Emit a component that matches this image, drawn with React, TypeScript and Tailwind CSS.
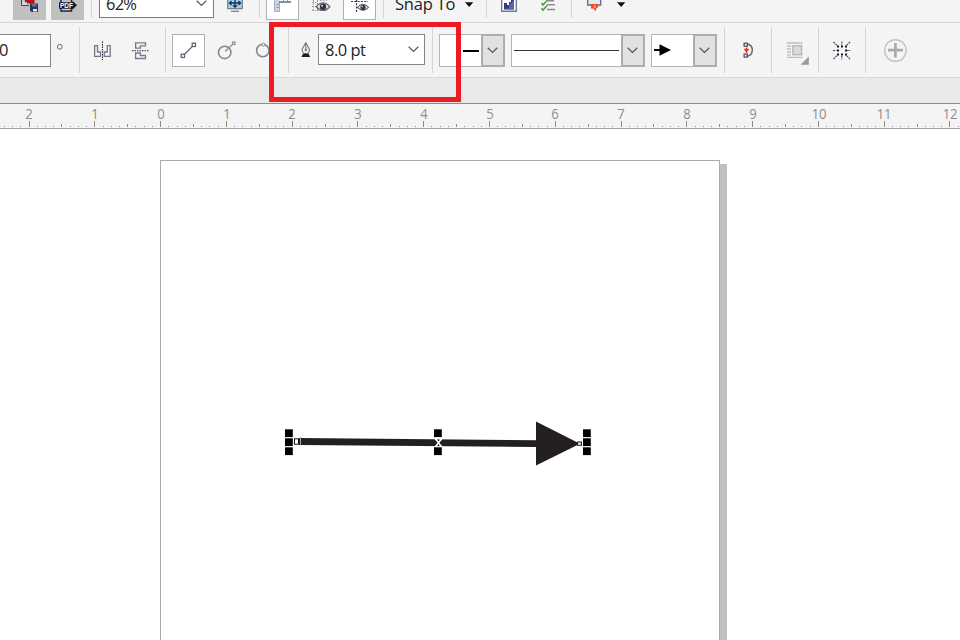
import React from "react";

const Sep = ({ className = "" }: { className?: string }) => (
  <div className={"w-px shrink-0 bg-[#d5d5d5] " + className} />
);

const Chevron = () => (
  <svg width="11" height="7" viewBox="0 0 11 7" fill="none" stroke="#555" strokeWidth="1.2">
    <path d="M0.7 0.8 L5.5 5.5 L10.3 0.8" />
  </svg>
);

const Caret = ({ className = "" }: { className?: string }) => (
  <svg className={"shrink-0 " + className} width="10" height="20" viewBox="0 0 10 20">
    <path d="M1 2.2 H9.3 L5.2 7 Z" fill="#111" />
  </svg>
);

const Combo = ({ className, children }: { className: string; children: React.ReactNode }) => (
  <div className={"flex h-[33px] shrink-0 border border-[#b4b4b4] bg-white " + className}>
    <div className="flex min-w-0 flex-1 items-center">{children}</div>
    <div className="-my-px -mr-px flex w-6 shrink-0 items-center justify-center border-2 border-[#adadad] bg-[#e1e1e1] pr-px">
      <Chevron />
    </div>
  </div>
);

const Eye = ({ x, y, s }: { x: number; y: number; s: number }) => (
  <g transform={`translate(${x} ${y}) scale(${s})`}>
    <path d="M-7 0 Q0 -8 7 0 Q0 7.5 -7 0Z" fill="#eeeeef" stroke="#66666f" strokeWidth="1.3" />
    <circle r="3.3" fill="#34343f" />
    <circle cx="-1" cy="-1" r="1" fill="#ddd" />
  </g>
);

function StandardBar() {
  return (
    <div className="flex h-[23px] items-start overflow-hidden border-b border-[#d8d8d8] bg-[#f4f4f4]">
      <div className="ml-[13px] h-5 w-[33px] shrink-0 bg-[#c0c0c0]">
        <svg width="33" height="20">
          <path d="M8.5 0 V5.5 H16" fill="#d5d5d8" stroke="#44445a" />
          <path d="M12 0 H21.5 V3.5 H14 V2 H12Z" fill="#b91018" />
          <path d="M17 3.5 H25 V12 H18.5 L17 10.5Z" fill="#2e3460" />
          <path d="M19 4 H23.5 V6.5 H19Z" fill="#687197" />
          <path d="M20 9 H24 V11.5 H20Z" fill="#e4e6ef" />
        </svg>
      </div>
      <div className="ml-[5px] h-5 w-[33px] shrink-0 bg-[#c0c0c0]">
        <svg width="33" height="20">
          <path d="M10 0 V3 M10 8 V11 H20.5 V8 M20.5 0 V2" fill="#d5d5d8" stroke="#22253b" strokeWidth="1.5" />
          <path d="M8 2.2 H21.5 V0.8 L26 5.2 L21.5 9.6 V8.8 H8Z" fill="#15182a" />
          <text x="9" y="7.9" fontSize="7" fontWeight="bold" textLength="13" lengthAdjust="spacingAndGlyphs" fill="#fff" className="font-['Liberation_Sans',sans-serif]">PDF</text>
        </svg>
      </div>
      <Sep className="ml-[7px] h-[18px]" />
      <div className="ml-[7px] flex h-[18px] w-[115px] shrink-0 items-end justify-between border border-t-0 border-[#7d7d7d] bg-white pr-1.5 pl-1.5">
        <span className="mb-[3px] text-[16.5px] leading-[20px] tracking-[-0.8px]">62%</span>
        <span className="mb-[10px]"><Chevron /></span>
      </div>
      <svg className="ml-[13px] shrink-0" width="17" height="20">
        <path d="M0.7 0 V8.7 H15.3 V0" fill="#9bd5ea" stroke="#777e91" strokeWidth="1.2" />
        <path d="M8 0 V7 M2.5 3 H13.5 M4.5 1 L2.5 3 L4.5 5 M11.5 1 L13.5 3 L11.5 5 M6 5.3 L8 7.2 L10 5.3" fill="none" stroke="#222b48" strokeWidth="1.3" />
        <path d="M4 11.3 H12" stroke="#777e91" strokeWidth="1.3" />
      </svg>
      <Sep className="ml-[15px] h-[18px]" />
      <div className="ml-1.5 h-5 w-[33px] shrink-0 border border-t-0 border-[#b0b0b0] bg-white">
        <svg width="31" height="19">
          <path d="M7.5 0 V11.5 H12.5 V2" fill="#c9d4e5" stroke="#a2abc0" />
          <path d="M7.5 0 H12.5 V2 H7.5Z" fill="#c9d4e5" />
          <path d="M12 2 H24" stroke="#68708a" strokeWidth="1.6" />
          <path d="M9.5 4.5 H12 M9.5 7.5 H12 M16.5 0 V1 M20.5 0 V1" stroke="#8a94ab" />
        </svg>
      </div>
      <svg className="ml-3 shrink-0" width="20" height="20">
        <path d="M2.5 0 V11 M6.5 0 V11" fill="none" stroke="#8b8b98" strokeDasharray="1.5 1.5" />
        <path d="M1 2.5 H7 M1 6.5 H7 M1 10.5 H8 M9 0.5 H16" fill="none" stroke="#9b9ba6" strokeDasharray="1.5 1.5" />
        <Eye x={12} y={6.8} s={0.98} />
      </svg>
      <div className="ml-3 h-5 w-[33px] shrink-0 border border-t-0 border-[#b0b0b0] bg-white">
        <svg width="31" height="19">
          <path d="M7 1.5 H24 M12.5 0 V13" stroke="#353541" strokeWidth="1.2" strokeDasharray="2 1.3" />
          <Eye x={19} y={7.4} s={0.8} />
        </svg>
      </div>
      <Sep className="ml-[7px] h-[18px]" />
      <span className="-mt-[7px] ml-[11px] w-[60px] shrink-0 text-[16.5px] leading-[22px] tracking-[-0.2px] whitespace-nowrap">Snap To</span>
      <Caret className="ml-[9px]" />
      <Sep className="ml-3 h-[18px]" />
      <svg className="ml-[13px] shrink-0" width="18" height="20">
        <path d="M1.7 0 V11.3 H16.3 V0" fill="#fff" stroke="#777990" strokeWidth="1.4" />
        <path d="M4 9.5 V3 H7 V5 H9 V2 H11 V0 H14 V9.5Z" fill="#373d80" />
        <path d="M9 5 L14 0 V9.5 H9Z" fill="#5966a7" />
      </svg>
      <svg className="ml-[22px] shrink-0" width="16" height="20">
        <path d="M7 0.7 H14 M7 4.8 H15 M7 9.5 H15" stroke="#8b8b91" strokeWidth="1.5" />
        <path d="M1.5 3 L3 5 L7 0.5 M1.5 8 L3 10.3 L7 5.5" fill="none" stroke="#529746" strokeWidth="1.5" />
      </svg>
      <Sep className="ml-[15px] h-[18px]" />
      <svg className="ml-[14px] shrink-0" width="16" height="20">
        <path d="M1.7 0 V5 H14.7 V0" fill="#e7e8f1" stroke="#66687f" strokeWidth="1.3" />
        <path d="M5 4 H12 L12.2 7 L10.5 8.2 L9.3 11.5 L7.8 8.8 L5 8.5Z" fill="#ef482a" />
        <path d="M8.7 4.5 C9.7 6 10 7 9 8.8 C7.5 7.5 7.7 6.5 8.7 4.5Z" fill="#ffc147" />
      </svg>
      <Caret className="ml-[14px]" />
    </div>
  );
}

function PropertyBar() {
  return (
    <div className="flex h-[55px] items-start overflow-hidden border-b border-[#d8d8d8] bg-[#f4f4f4]">
      <div className="mt-[11px] flex h-[33px] w-[51px] shrink-0 items-center border border-l-0 border-[#858585] bg-white text-[16.5px] tracking-[-0.5px]">
        <span className="-ml-px">0</span>
      </div>
      <svg className="mt-5 ml-[5px] shrink-0" width="8" height="8">
        <circle cx="3.8" cy="3.8" r="2.4" fill="none" stroke="#666" />
      </svg>
      <Sep className="mt-1 ml-[15px] h-[46px]" />
      <svg className="mt-[17px] ml-[13px] shrink-0" width="20" height="22" fill="none">
        <path d="M1.6 5.7 H4.5 V12 H7.5 V16.4 H1.6Z M17.2 5.7 H14.3 V12 H11.3 V16.4 H17.2Z" stroke="#77778c" strokeWidth="1.3" />
        <path d="M9.5 1.5 V20" stroke="#252538" strokeWidth="1.1" strokeDasharray="1.5 1" />
      </svg>
      <svg className="mt-[17px] ml-[18px] shrink-0" width="20" height="22" fill="none">
        <path d="M4.6 2.8 H14.5 V5.8 H9.3 V8.2 H4.6Z M4.6 13 H9.3 V15.5 H14.5 V18.5 H4.6Z" stroke="#77778c" strokeWidth="1.3" />
        <path d="M1 10.7 H18.5" stroke="#252538" strokeWidth="1.1" strokeDasharray="1.5 1" />
      </svg>
      <Sep className="mt-1 ml-[14px] h-[46px]" />
      <div className="mt-[11px] ml-1.5 flex h-[33px] w-[33px] shrink-0 border border-[#b0b0b0] bg-white">
        <svg width="31" height="31" fill="none" stroke="#65657a" strokeWidth="1.3">
          <path d="M11.2 19.5 L19.5 11.4" />
          <rect x="8.2" y="19.2" width="3.3" height="3.3" />
          <rect x="19.2" y="8.2" width="3.3" height="3.3" />
        </svg>
      </div>
      <svg className="mt-[17px] ml-3 shrink-0" width="20" height="22" fill="none" stroke="#858594" strokeWidth="1.6">
        <circle cx="7.7" cy="12.4" r="6.2" />
        <path d="M9.3 10.4 L16 3.9" strokeWidth="1.2" />
        <rect x="15.5" y="2" width="2.5" height="2.5" fill="#f4f4f4" strokeWidth="1.1" />
        <circle cx="9" cy="10.7" r="0.7" strokeWidth="0.8" />
      </svg>
      <svg className="mt-[17px] ml-[18px] shrink-0" width="20" height="22" fill="none" stroke="#858594" strokeWidth="1.6">
        <circle cx="7.8" cy="10.5" r="6.2" />
        <circle cx="8.4" cy="4.6" r="1.5" fill="#f4f4f4" strokeWidth="1" />
      </svg>
      <Sep className="mt-1 ml-[13px] h-[46px]" />
      <svg className="mt-[19px] ml-[11px] shrink-0" width="12" height="16">
        <path d="M5.8 0.7 L9.5 7.5 Q9.5 9.5 7.8 11.5 H3.8 Q2 9.5 2 7.5Z" fill="#f5f5f5" stroke="#77778a" strokeWidth="1.1" />
        <path d="M5.8 1 V8" stroke="#66667a" />
        <circle cx="5.8" cy="8" r="1.2" fill="#777789" />
        <path d="M3 11.8 H8.6 L10.2 15 H1.4Z" fill="#1d1d28" />
      </svg>
      <div className="mt-[11px] ml-1.5 flex h-[31px] w-[107px] shrink-0 items-center justify-between border border-[#858585] bg-white pr-[5px] pl-1.5">
        <span className="pt-0.5 text-[16.5px] tracking-[-0.5px]">8.0 pt</span>
        <Chevron />
      </div>
      <Sep className="mt-1 ml-[7px] h-[46px]" />
      <Combo className="mt-[11px] ml-1.5 w-[66px]">
        <div className="mr-0.5 ml-auto h-0.5 w-4 bg-black" />
      </Combo>
      <Combo className="mt-[11px] ml-1.5 w-[134px]">
        <div className="ml-0.5 h-[1.5px] w-[105px] bg-[#333]" />
      </Combo>
      <Combo className="mt-[11px] ml-1.5 w-[66px]">
        <svg width="20" height="12" className="mb-0.5 ml-0.5">
          <path d="M0 6 H6" stroke="#000" strokeWidth="2" />
          <path d="M5.5 0.3 L17 6 L5.5 11.7Z" />
        </svg>
      </Combo>
      <Sep className="mt-1 ml-[7px] h-[46px]" />
      <svg className="mt-[18px] ml-[17px] shrink-0" width="14" height="18" fill="none">
        <path d="M5 3 Q10.5 4 10.3 9.3 Q10 14.6 5 15.3" stroke="#66667a" strokeWidth="1.5" />
        <rect x="2.1" y="2.2" width="3.2" height="3" fill="#fff" stroke="#44445c" strokeWidth="1.2" />
        <rect x="2.1" y="13.1" width="3.2" height="3" fill="#fff" stroke="#44445c" strokeWidth="1.2" />
        <path d="M2 7.7 H7 L6 10.2 H5.2 V12 H3.8 V10.2 H3Z M3.8 6.5 H5.2 V8 H3.8Z" fill="#e2391d" />
      </svg>
      <Sep className="mt-1 ml-[15px] h-[46px]" />
      <svg className="mt-[17px] ml-[14px] shrink-0" width="24" height="26">
        <path d="M1 3 H16.5 M1 6 H5 M1 9 H5 M1 12 H5 M1 14.8 H5 M1 17.4 H16.5" stroke="#bdbdbd" strokeWidth="1.3" />
        <rect x="6.8" y="5.8" width="8.8" height="9" fill="#d9d9d9" stroke="#b5b5b5" strokeWidth="1.3" />
        <path d="M22.8 16.5 V24.7 H14.6Z" fill="#999" />
      </svg>
      <Sep className="mt-1 ml-2 h-[46px]" />
      <svg className="mt-[17px] ml-[13px] shrink-0" width="20" height="22" fill="none">
        <path d="M1.5 2 L5 5.5 M18 2 L14.5 5.5 M1.5 19 L5 15.5 M18 19 L14.5 15.5 M9.8 1.5 V5 M9.8 16 V19.5 M1 10.5 H4.5 M15 10.5 H18.5" stroke="#47475c" strokeWidth="1.1" strokeDasharray="2 0.8" />
        <path d="M5 5.5 H7 V7.5 H5Z M9 5.5 H11 V7.5 H9Z M13 5.5 H15 V7.5 H13Z M5 9.5 H7 V11.5 H5Z M13 9.5 H15 V11.5 H13Z M5 13.5 H7 V15.5 H5Z M9 13.5 H11 V15.5 H9Z M13 13.5 H15 V15.5 H13Z" fill="#171729" />
      </svg>
      <Sep className="mt-1 ml-[13px] h-[46px]" />
      <svg className="mt-[15px] ml-[17px] shrink-0" width="25" height="25" fill="none">
        <circle cx="12.4" cy="12.5" r="10.8" stroke="#c4c4c4" strokeWidth="1.4" />
        <path d="M12.4 5 V19.5 M5 12.1 H20" stroke="#aaa" strokeWidth="2.7" />
      </svg>
    </div>
  );
}

const labels = [2, 1, 0, 1, 2, 3, 4, 5, 6, 7, 8, 9, 10, 11, 12];
const STEP = 65.78;
const FIRST = 29;

function Ruler() {
  const ticks = Array.from({ length: 120 }, (_, i) => i - 4);
  return (
    <div className="h-[25px] overflow-hidden border-b border-[#a0a0a0] bg-[#f4f4f4]">
      <div className="-ml-[3.7px] flex h-[17px]">
        {labels.map((n, i) => (
          <div key={i} className="w-[65.78px] shrink-0 scale-x-90 text-center text-[14.5px] leading-[20px] tracking-[-0.4px] text-[#8d8d8d]">{n}</div>
        ))}
      </div>
      <svg width="960" height="7" className="block">
        {ticks.map((k) => {
          const x = Math.floor(FIRST + (k * STEP) / 8);
          const major = k % 8 === 0;
          const half = k % 4 === 0;
          return (
            <rect
              key={k}
              x={x}
              y={major ? 0 : half ? 3 : 5}
              width="1"
              height={major ? 6 : half ? 3 : 1}
              fill={major || half ? "#8c8c8c" : "#909090"}
            />
          );
        })}
      </svg>
    </div>
  );
}

const handles = [
  [285, 429], [285, 438], [285, 447],
  [434, 429], [434, 447],
  [583, 429], [583, 438], [583, 447],
];

export default function App() {
  return (
    <div className="relative flex h-[640px] w-[960px] flex-col overflow-hidden bg-white font-['Open_Sans','Noto_Sans',sans-serif] text-[#222]">
      <StandardBar />
      <PropertyBar />
      <div className="h-[25px] shrink-0 bg-[#e9e9e9]" />
      <div className="h-px shrink-0 bg-[#42a5cf]" />
      <Ruler />
      <div className="flex flex-1 overflow-hidden pt-[31px] pl-[160px]">
        <div className="w-[560px] shrink-0 border border-b-0 border-[#ababab] bg-white" />
        <div className="mt-1 w-[6.5px] shrink-0 bg-[#bfbfbf]" />
      </div>

      <svg className="absolute inset-0" width="960" height="640">
        <path d="M299 438 L536 440.2 V447 L299 444.9Z" fill="#231f20" />
        <path d="M536 421.5 L580 443.8 L536 465.5Z" fill="#231f20" />
        {handles.map(([x, y]) => (
          <rect key={`${x}-${y}`} x={x} y={y + 0.3} width="7.8" height="7.8" fill="#000" />
        ))}
        <rect x="294.5" y="438.8" width="4" height="5.4" fill="#fff" stroke="#111" />
        <path d="M300.5 437 V445.5" stroke="#aaa" />
        <path d="M436 439.5 L441 446 M441 439.5 L436 446 M435 439.5 H437.5 M439.5 439.5 H442 M435 446 H437.5 M439.5 446 H442" stroke="#fff" strokeWidth="1.4" />
        <rect x="577.5" y="442" width="4" height="3.3" fill="#ddd" stroke="#222" />
      </svg>

      <div className="absolute top-[22px] left-[268.5px] h-[79.5px] w-[192.5px] border-5 border-[#ed1c24]" />
    </div>
  );
}
